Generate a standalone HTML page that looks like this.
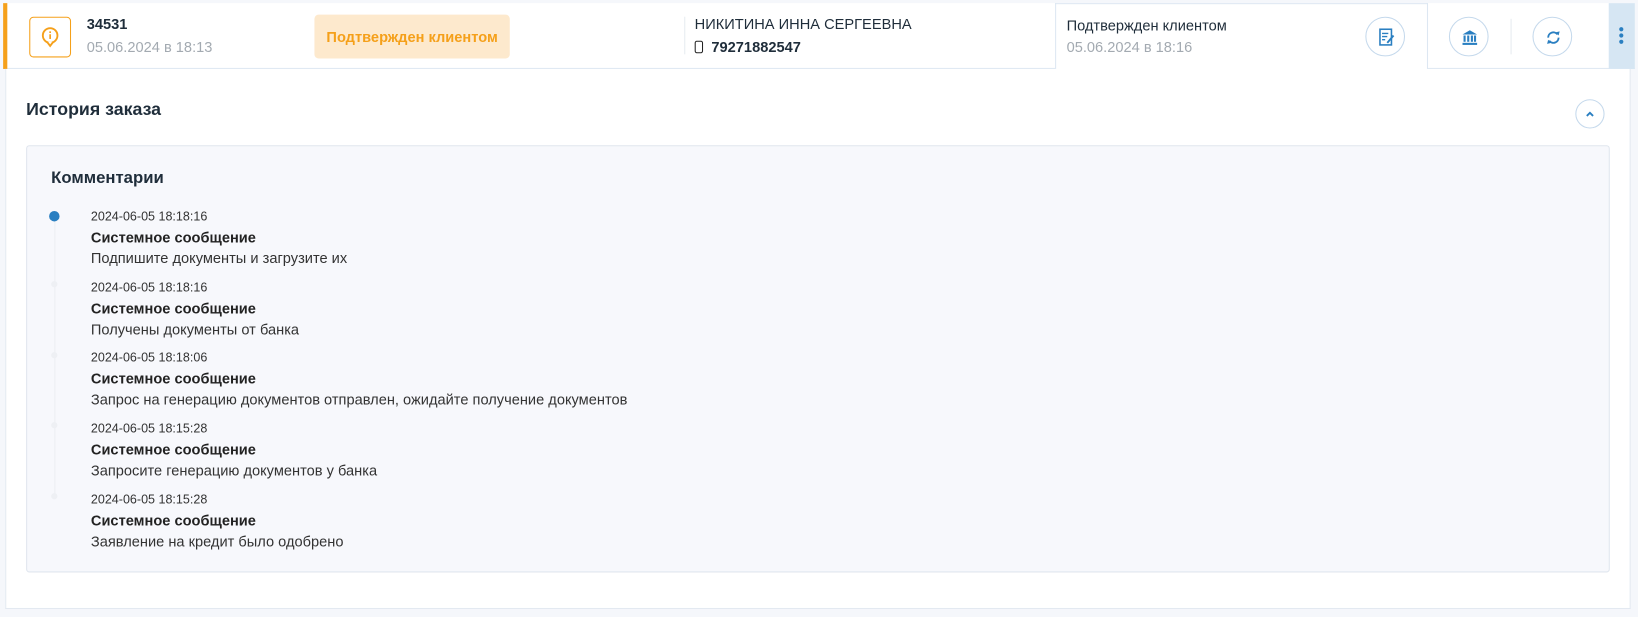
<!DOCTYPE html>
<html><head><meta charset="utf-8"><style>
*{box-sizing:border-box;margin:0;padding:0}
body{width:1638px;height:617px;background:#f5f7fb;font-family:"Liberation Sans",sans-serif;color:#1f2d3a;position:relative;overflow:hidden}
#w{position:absolute;left:0;top:0;width:1568px;height:591px;transform:scale(1.04464);transform-origin:0 0}
.abs{position:absolute}
.row{left:3px;top:3px;width:1562px;height:63px;background:#fff;border-bottom:1px solid #dde7f2}
.bar{left:3px;top:3px;width:4px;height:63px;background:#f5a01a}
.icon{left:28px;top:16px;width:40px;height:39px;border:1px solid #f5a01a;border-radius:4px}
.t1{font-size:14px;font-weight:bold}
.t2{font-size:14px;color:#a3aab1}
.badge{left:301px;top:14px;width:187px;height:42px;background:#fde9cd;border-radius:4px;color:#f5a01a;font-weight:bold;font-size:14px;line-height:42px;text-align:center}
.circ{width:38px;height:38px;border:1px solid #c5d9ec;border-radius:50%;background:#fff}
.panel{left:5px;top:66px;width:1556px;height:517px;background:#fff;border:1px solid #e3e9f1;border-top:none}
.box{left:25px;top:139px;width:1516px;height:409px;background:#f7f8fc;border:1px solid #e0e6ee;border-radius:3px}
.d{font-size:12px;color:#333}
.h{font-size:14px;font-weight:bold;color:#222}
.p{font-size:14px;color:#333}
.dot{width:6px;height:6px;border-radius:50%;background:#eef0f4}
</style></head><body><div id="w">
<div class="abs row"></div>
<div class="abs bar"></div>
<div class="abs icon"><svg width="40" height="39" viewBox="0 0 40 39"><circle cx="19" cy="17" r="7" fill="none" stroke="#f5a01a" stroke-width="1.8"/><path d="M16 23 L19 27 L22 23" fill="#fff" stroke="#f5a01a" stroke-width="1.8"/><rect x="18.2" y="13" width="1.6" height="1.6" fill="#f5a01a"/><rect x="18.2" y="15.8" width="1.6" height="4.5" fill="#f5a01a"/></svg></div>
<div class="abs t1" style="left:83px;top:15px">34531</div>
<div class="abs t2" style="left:83px;top:37px">05.06.2024 в 18:13</div>
<div class="abs badge">Подтвержден клиентом</div>
<div class="abs" style="left:655px;top:16px;width:1px;height:36px;background:#e6ebf0"></div>
<div class="abs" style="left:665px;top:15px;font-size:14px;font-weight:500">НИКИТИНА ИННА СЕРГЕЕВНА</div>
<div class="abs" style="left:665px;top:37px;font-size:14px;font-weight:bold"><span style="display:inline-block;width:8px;height:12px;border:1.5px solid #222;border-radius:2px;margin-right:8px;vertical-align:-1px"></span>79271882547</div>
<div class="abs" style="left:1010px;top:3px;width:357px;height:64px;background:#fff;border:1px solid #dde7f2;border-bottom:none"></div>
<div class="abs" style="left:1021px;top:16px;font-size:14px;font-weight:500">Подтвержден клиентом</div>
<div class="abs t2" style="left:1021px;top:37px">05.06.2024 в 18:16</div>
<div class="abs circ" style="left:1307px;top:16px"><svg width="38" height="38"><rect x="13" y="11" width="11" height="15" fill="none" stroke="#2a7fc1" stroke-width="1.5"/><path d="M15 15h6M15 18h5M15 21h3" stroke="#2a7fc1" stroke-width="1.3"/><path d="M20 24l6-7" stroke="#2a7fc1" stroke-width="1.8"/></svg></div>
<div class="abs circ" style="left:1387px;top:16px"><svg width="38" height="38"><path d="M12 16l7-4 7 4z" fill="#2a7fc1"/><rect x="13" y="17" width="2" height="6" fill="#2a7fc1"/><rect x="16.5" y="17" width="2" height="6" fill="#2a7fc1"/><rect x="20" y="17" width="2" height="6" fill="#2a7fc1"/><rect x="23" y="17" width="2" height="6" fill="#2a7fc1"/><rect x="12" y="24" width="14" height="2" fill="#2a7fc1"/></svg></div>
<div class="abs" style="left:1446px;top:18px;width:1px;height:34px;background:#e6ebf0"></div>
<div class="abs circ" style="left:1467px;top:16px"><svg width="38" height="38"><path d="M14 19a5 5 0 0 1 9-3M24 19a5 5 0 0 1-9 3" fill="none" stroke="#2a7fc1" stroke-width="1.8"/><path d="M21 14l3 3 1-4zM17 24l-3-3-1 4z" fill="#2a7fc1"/></svg></div>
<div class="abs" style="left:1540px;top:3px;width:25px;height:63px;background:#d6e6f3"></div>
<div class="abs" style="left:1550px;top:26px;width:4px;height:4px;border-radius:50%;background:#2a7fc1;box-shadow:0 6px 0 #2a7fc1,0 12px 0 #2a7fc1"></div>
<div class="abs panel"></div>
<div class="abs" style="left:25px;top:95px;font-size:17px;font-weight:bold">История заказа</div>
<div class="abs" style="left:1508px;top:95px;width:28px;height:28px;border:1px solid #c5d9ec;border-radius:50%"><svg width="26" height="26"><path d="M10 15l3-3 3 3" fill="none" stroke="#2a7fc1" stroke-width="1.8"/></svg></div>
<div class="abs box"></div>
<div class="abs" style="left:49px;top:162px;font-size:16px;font-weight:bold">Комментарии</div>
<div class="abs" style="left:52px;top:207px;width:1px;height:270px;background:#eceff3"></div>
<div class="abs" style="left:47px;top:202px;width:10px;height:10px;border-radius:50%;background:#2a7fc1"></div>
<div class="abs dot" style="left:49px;top:269px"></div>
<div class="abs dot" style="left:49px;top:337px"></div>
<div class="abs dot" style="left:49px;top:404px"></div>
<div class="abs dot" style="left:49px;top:472px"></div>
<div class="abs" style="left:87px;top:197px;line-height:20px">
<div class="d">2024-06-05 18:18:16</div><div class="h">Системное сообщение</div><div class="p">Подпишите документы и загрузите их</div>
<div class="d" style="margin-top:8px">2024-06-05 18:18:16</div><div class="h">Системное сообщение</div><div class="p">Получены документы от банка</div>
<div class="d" style="margin-top:7px">2024-06-05 18:18:06</div><div class="h">Системное сообщение</div><div class="p">Запрос на генерацию документов отправлен, ожидайте получение документов</div>
<div class="d" style="margin-top:8px">2024-06-05 18:15:28</div><div class="h">Системное сообщение</div><div class="p">Запросите генерацию документов у банка</div>
<div class="d" style="margin-top:8px">2024-06-05 18:15:28</div><div class="h">Системное сообщение</div><div class="p">Заявление на кредит было одобрено</div>
</div>
</div></body></html>
